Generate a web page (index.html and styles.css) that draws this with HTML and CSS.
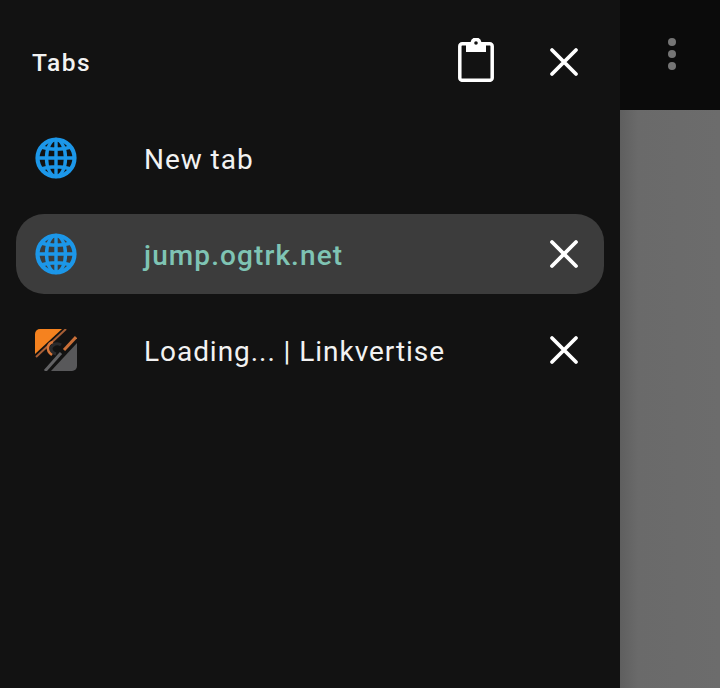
FILE: index.html
```html
<!DOCTYPE html>
<html lang="en">
<head>
<meta charset="utf-8">
<title>Tabs</title>
<link rel="stylesheet" href="styles.css">
</head>
<body>
<div class="screen">
  <aside class="drawer">
    <header class="drawer-head">
      <h1 class="drawer-title">Tabs</h1>
      <button class="icon-btn clip-btn" aria-label="Clipboard">
        <svg class="clip-icon" viewBox="0 0 42 44"><path class="line" d="M11 5.800H7.200a2.400 2.400 0 0 0-2.400 2.400v31.700a2.400 2.400 0 0 0 2.400 2.400h27.600a2.400 2.400 0 0 0 2.400-2.400V8.200a2.400 2.400 0 0 0-2.400-2.400H31"/><path class="solid" d="M11 4h4.600a5.500 5.500 0 0 1 10.800 0H31v10H11zM21 3.200a1.800 1.800 0 1 0 0 3.600 1.800 1.800 0 0 0 0-3.600z"/></svg>
      </button>
      <button class="icon-btn" aria-label="Close">
        <svg class="icon" viewBox="0 0 42 42"><path class="cross" d="M9 9l24 24M33 9L9 33"/></svg>
      </button>
    </header>
    <ul class="tabs">
      <li class="tab">
        <svg class="favicon" viewBox="0 0 42 42"><circle class="globe-rim" cx="21" cy="21" r="18.500"/><g class="globe"><ellipse cx="21" cy="21" rx="9.500" ry="18.500"/><path d="M21 2.500v37M6 10q15 4.500 30 0M2.500 21h37M6 32q15-4.500 30 0"/></g></svg>
        <span class="tab-name">New tab</span>
      </li>
      <li class="tab tab-active">
        <svg class="favicon" viewBox="0 0 42 42"><circle class="globe-rim" cx="21" cy="21" r="18.500"/><g class="globe"><ellipse cx="21" cy="21" rx="9.500" ry="18.500"/><path d="M21 2.500v37M6 10q15 4.500 30 0M2.500 21h37M6 32q15-4.500 30 0"/></g></svg>
        <span class="tab-name">jump.ogtrk.net</span>
        <button class="icon-btn" aria-label="Close tab">
          <svg class="icon" viewBox="0 0 42 42"><path class="cross" d="M9 9l24 24M33 9L9 33"/></svg>
        </button>
      </li>
      <li class="tab">
        <svg class="favicon" viewBox="0 0 42 42">
          <path fill="#f5821f" d="M5 0h22L0 25V5a5 5 0 0 1 5-5z"/>
          <path fill="#58585a" d="M42 14v23a5 5 0 0 1-5 5H16z"/>
          <path fill="none" stroke="#a85f36" stroke-width="2" d="M31 0L1 28"/>
          <path fill="none" stroke="#c96f38" stroke-width="3" d="M41 8L29 21"/>
          <path fill="none" stroke="#626264" stroke-width="3" d="M26 24L10 42"/>
          <path fill="none" stroke="#2a2a2c" stroke-width="3" d="M26 16a6.500 6.500 0 0 0-10 3c0 3 2 5 5 6"/>
          <path fill="none" stroke="#d9773a" stroke-width="2.500" d="M18 13c-5 1-8 8-1 13"/>
        </svg>
        <span class="tab-name">Loading... | Linkvertise</span>
        <button class="icon-btn" aria-label="Close tab">
          <svg class="icon" viewBox="0 0 42 42"><path class="cross" d="M9 9l24 24M33 9L9 33"/></svg>
        </button>
      </li>
    </ul>
  </aside>
  <main class="backdrop">
    <div class="toolbar">
      <span class="kebab"><i></i><i></i><i></i></span>
    </div>
    <div class="content"></div>
  </main>
</div>
</body>
</html>
```

FILE: styles.css
```css
* { box-sizing: border-box; }

html, body {
  margin: 0;
  height: 100%;
  background: #121212;
}

body {
  font-family: Roboto, "Noto Sans", sans-serif;
  color: #f2f2f2;
}

.screen {
  display: flex;
  width: 720px;
  height: 688px;
  overflow: hidden;
}

/* Navigation drawer */
.drawer {
  width: 620px;
  flex: none;
  background: #121212;
  padding: 0 16px;
}

.drawer-head {
  display: flex;
  align-items: center;
  height: 118px;
  padding: 6px 19px 0 16px;
}

.drawer-title {
  margin: 2px auto 0 0;
  font-size: 24.500px;
  font-weight: 500;
  letter-spacing: 1.550px;
  line-height: 32px;
}

.icon-btn {
  display: block;
  width: 42px;
  height: 42px;
  padding: 0;
  border: 0;
  background: none;
}

.clip-btn {
  margin-right: 46px;
  height: 44px;
  position: relative;
  top: -2px;
}

.icon {
  display: block;
  width: 42px;
  height: 42px;
}

.clip-icon {
  display: block;
  width: 42px;
  height: 44px;
}

.cross {
  fill: none;
  stroke: #fff;
  stroke-width: 3.800;
  stroke-linecap: round;
}

.line {
  fill: none;
  stroke: #fff;
  stroke-width: 3.500;
}

.solid {
  fill: #fff;
  fill-rule: evenodd;
}

/* Tab rows */
.tabs {
  list-style: none;
  margin: 0;
  padding: 0;
  display: flex;
  flex-direction: column;
  gap: 16px;
}

.tab {
  display: flex;
  align-items: center;
  height: 80px;
  padding: 0 19px;
  border-radius: 28px;
  font-size: 28px;
  letter-spacing: 0.950px;
}

.tab-active {
  background: #3c3c3c;
  color: #7fc4b4;
  font-weight: 500;
  letter-spacing: 1.100px;
}

.favicon {
  width: 42px;
  height: 42px;
  flex: none;
  margin-right: 67px;
}

.globe-rim {
  fill: none;
  stroke: #1c97e9;
  stroke-width: 4.200;
}

.globe {
  fill: none;
  stroke: #1c97e9;
  stroke-width: 3.400;
}

.tab-name {
  flex: 1;
  white-space: nowrap;
  padding-top: 2px;
}

/* Page behind the drawer */
.backdrop {
  flex: 1;
  display: flex;
  flex-direction: column;
}

.toolbar {
  height: 110px;
  background: #0b0b0b;
  display: flex;
  justify-content: center;
  padding: 38px 0 0 4px;
}

.kebab {
  display: flex;
  flex-direction: column;
  gap: 4px;
}

.kebab i {
  display: block;
  width: 8px;
  height: 8px;
  border-radius: 50%;
  background: #757575;
}

.content {
  flex: 1;
  background: linear-gradient(90deg, #5f5f5f, #6a6a6a 18px, #6c6c6c);
}
```
